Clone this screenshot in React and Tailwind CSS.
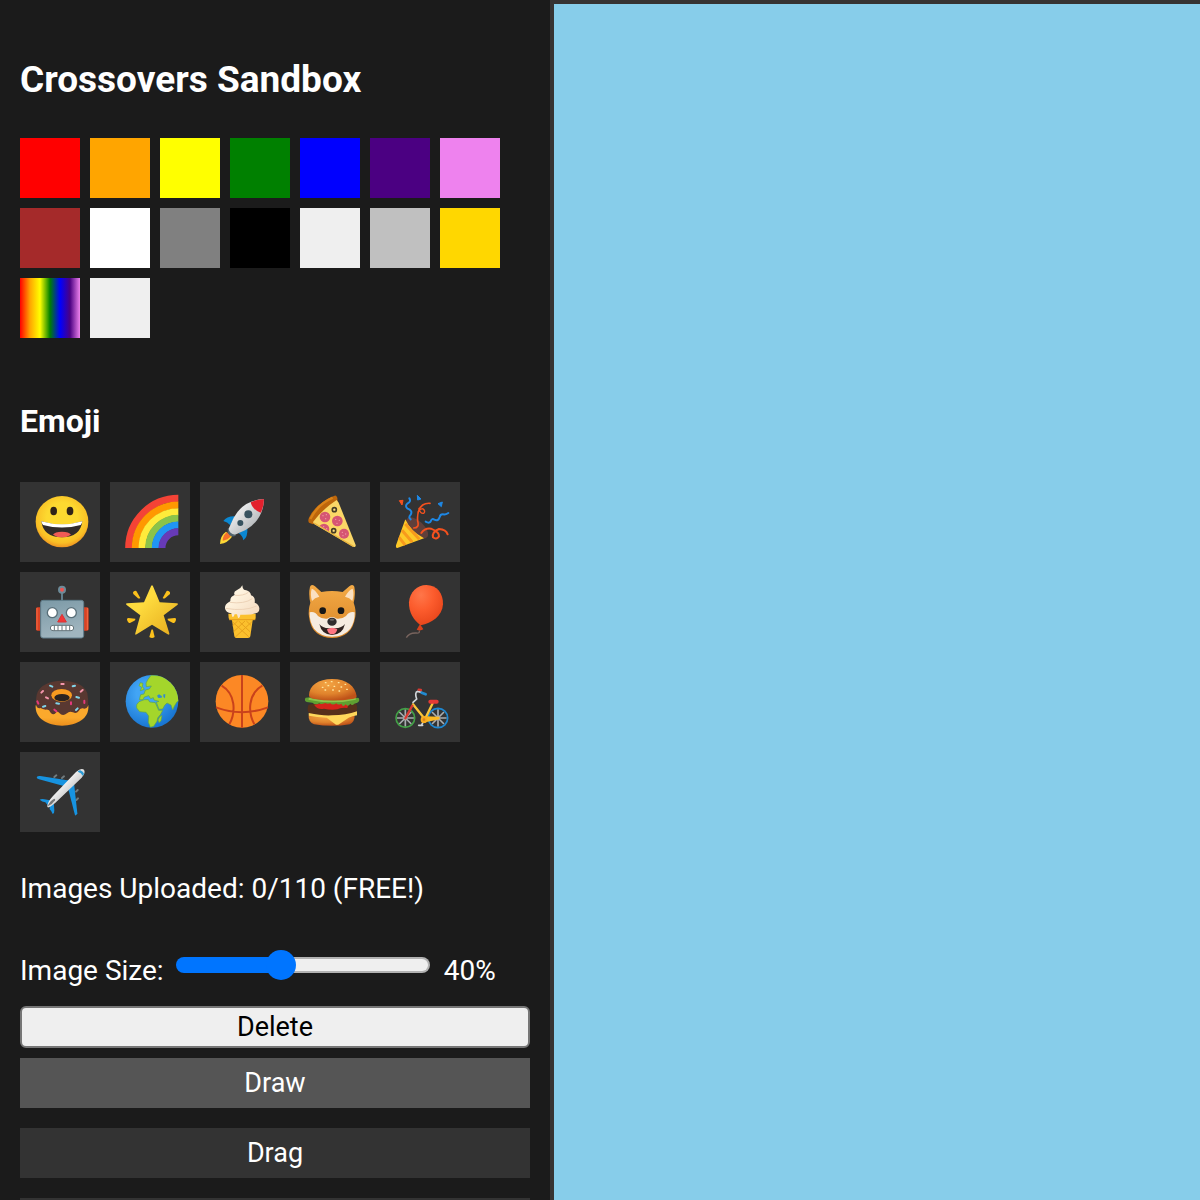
import { useState } from 'react';

const COLORS = [
  { name: 'Red', className: 'bg-[#ff0000]' },
  { name: 'Orange', className: 'bg-[#ffa500]' },
  { name: 'Yellow', className: 'bg-[#ffff00]' },
  { name: 'Green', className: 'bg-[#008000]' },
  { name: 'Blue', className: 'bg-[#0000ff]' },
  { name: 'Indigo', className: 'bg-[#4b0082]' },
  { name: 'Violet', className: 'bg-[#ee82ee]' },
  { name: 'Brown', className: 'bg-[#a52a2a]' },
  { name: 'White', className: 'bg-white' },
  { name: 'Gray', className: 'bg-[#808080]' },
  { name: 'Black', className: 'bg-black' },
  { name: 'Default', className: 'bg-[#efefef]' },
  { name: 'Silver', className: 'bg-[#c0c0c0]' },
  { name: 'Gold', className: 'bg-[#ffd700]' },
  {
    name: 'Rainbow',
    className: 'bg-[linear-gradient(to_right,red,orange,yellow,green,blue,indigo,violet)]',
  },
  { name: 'Eraser', className: 'bg-[#efefef]' },
];

function Grinning() {
  return (
    <>
      <defs>
        <radialGradient id="face" cx="50%" cy="42%" r="58%">
          <stop offset="0.5" stopColor="#fdd930" />
          <stop offset="0.85" stopColor="#f9bf25" />
          <stop offset="1" stopColor="#ee9422" />
        </radialGradient>
      </defs>
      <ellipse cx="126" cy="119" rx="79" ry="77" fill="url(#face)" />
      <ellipse cx="101" cy="87" rx="10" ry="13" fill="#302318" />
      <ellipse cx="150" cy="87" rx="10" ry="13" fill="#302318" />
      <path d="M64 118Q126 138 187 118Q181 166 126 166Q70 166 64 118Z" fill="#302b2a" />
      <path d="M64 118Q126 136 187 118Q186 125 182 129Q126 144 69 129Q65 125 64 118Z" fill="#fff" />
      <path d="M99 158Q104 149 126 149Q147 149 153 158Q142 166 126 166Q110 166 99 158Z" fill="#ef5a55" />
    </>
  );
}

function Rainbow() {
  return (
    <g fill="none" strokeWidth="21">
      <path d="M56 198A149 149 0 0 1 205 49" stroke="#f44336" />
      <path d="M76 198A129 129 0 0 1 205 69" stroke="#ff9800" />
      <path d="M96 198A109 109 0 0 1 205 89" stroke="#ffeb3b" />
      <path d="M116 198A89 89 0 0 1 205 109" stroke="#8bc34a" />
      <path d="M136 198A69 69 0 0 1 205 129" stroke="#2196f3" />
      <path d="M156 198A49 49 0 0 1 205 149" stroke="#673ab7" />
    </g>
  );
}

function Rocket() {
  return (
    <>
      <defs>
        <linearGradient id="hull" x1="0" y1="0" x2="1" y2="1">
          <stop offset="0.2" stopColor="#f5f5f5" />
          <stop offset="0.75" stopColor="#b5b9bc" />
        </linearGradient>
      </defs>
      <path d="M70 117Q80 102 105 103L91 130Q82 119 70 117Z" fill="#0b87d1" />
      <path d="M142 139Q144 165 130 175Q128 161 116 154Z" fill="#0b87d1" />
      <path d="M60 186Q61 160 78 149L96 164Q84 182 60 186Z" fill="#fdd835" />
      <path d="M68 176Q69 158 81 151L93 162Q84 174 68 176Z" fill="#f4702c" />
      <path d="M84 138L108 161Q97 166 89 160Q80 152 84 138Z" fill="#52656e" />
      <path d="M192 52Q132 52 101 107L86 140Q88 155 105 158L137 144Q190 113 192 52Z" fill="url(#hull)" />
      <path d="M192 52Q171 51 152 61Q156 82 182 92Q192 72 192 52Z" fill="#e3202d" />
      <circle cx="145" cy="97" r="12" fill="#37525f" />
      <circle cx="121" cy="123" r="9" fill="#37525f" />
    </>
  );
}

function Pizza() {
  return (
    <>
      <defs>
        <clipPath id="slice">
          <path d="M138 50Q96 79 69 119L197 195Z" />
        </clipPath>
      </defs>
      <path d="M132 42Q138 38 142 47L143 66L69 127L57 122Q53 117 57 107Q77 65 132 42Z" fill="#bd660b" />
      <path d="M128 47Q82 68 61 111" fill="none" stroke="#d98218" strokeWidth="7" />
      <path d="M140 54Q98 81 69 120L72 126L190 194Q198 197 197 189L146 62Z" fill="#fbd767" />
      <path d="M72 123L190 193" stroke="#eab53f" strokeWidth="4" />
      <g fill="#d65573" clipPath="url(#slice)">
        <circle cx="105" cy="105" r="16" />
        <circle cx="142" cy="117" r="16" />
        <circle cx="102" cy="141" r="16" />
        <circle cx="162" cy="155" r="15" />
      </g>
      <g fill="#f19aa8">
        <circle cx="99" cy="101" r="2" /><circle cx="109" cy="98" r="2" /><circle cx="107" cy="110" r="2" />
        <circle cx="137" cy="112" r="2" /><circle cx="148" cy="115" r="2" /><circle cx="141" cy="124" r="2" />
        <circle cx="157" cy="151" r="2" /><circle cx="167" cy="156" r="2" /><circle cx="159" cy="161" r="2" />
        <circle cx="101" cy="134" r="2" /><circle cx="110" cy="140" r="2" />
      </g>
      <g fill="#ffe082" stroke="#453b24" strokeWidth="5">
        <circle cx="133" cy="83" r="6" />
        <circle cx="131" cy="146" r="6" />
      </g>
    </>
  );
}

function Party() {
  return (
    <>
      <defs>
        <clipPath id="cone">
          <path d="M76 112Q92 148 132 169L52 198Q46 198 48 190Z" />
        </clipPath>
      </defs>
      <ellipse cx="111" cy="138" rx="41" ry="21" transform="rotate(43 111 138)" fill="#603f3a" />
      <g clipPath="url(#cone)">
        <path d="M40 105H140V200H40Z" fill="#fdc928" />
        <path d="M76 126L118 172M66 145L97 181M55 163L76 190" stroke="#f79a1d" strokeWidth="9" />
      </g>
      <g fill="none" strokeLinecap="round" strokeWidth="6">
        <path d="M88 49Q94 59 83 64Q73 72 83 80Q99 86 92 98Q84 107 92 112" stroke="#1e88e5" />
        <path d="M101 138Q119 138 113 117Q110 83 128 69Q137 63 150 64" stroke="#f4511e" strokeWidth="5" />
        <path d="M117 79Q121 96 131 94Q138 87 128 80Q120 80 115 90" stroke="#f4511e" strokeWidth="4" />
        <path d="M137 119Q150 126 153 116Q156 108 163 113Q175 119 179 105Q181 96 190 97Q196 99 205 93" stroke="#1e88e5" />
        <path d="M124 153Q135 137 153 140Q178 150 177 163Q169 174 159 166Q155 150 177 141Q198 142 203 157" stroke="#f4511e" />
      </g>
      <path d="M58 56L69 55L66 69Z" fill="#f4511e" stroke="#f4511e" strokeWidth="3" />
      <path d="M112 40L123 51L113 54Z" fill="#1e88e5" stroke="#1e88e5" strokeWidth="3" />
      <path d="M174 65L187 60L184 74Z" fill="#1e88e5" stroke="#1e88e5" strokeWidth="3" />
    </>
  );
}

function Robot() {
  return (
    <>
      <defs>
        <linearGradient id="metal" x1="0" y1="0" x2="0.3" y2="1">
          <stop offset="0" stopColor="#7b99a6" />
          <stop offset="1" stopColor="#a0b5bf" />
        </linearGradient>
      </defs>
      <path d="M126 60V88" stroke="#607d8b" strokeWidth="6" />
      <circle cx="126" cy="53" r="12" fill="#6d8b99" />
      <circle cx="126" cy="53" r="6" fill="#ef5350" />
      <path d="M61 106H52Q48 106 48 111V171Q48 176 52 176H61Z" fill="#d94224" />
      <path d="M192 106H201Q206 106 206 111V171Q206 176 201 176H192Z" fill="#d94224" />
      <path d="M51 108V174M202 108V174" stroke="#f26b45" strokeWidth="3" />
      <rect x="62" y="85" width="129" height="113" rx="7" fill="url(#metal)" stroke="#607d8b" strokeWidth="3" />
      <circle cx="97" cy="122" r="15" fill="#fff" stroke="#596f79" strokeWidth="4" />
      <circle cx="154" cy="122" r="15" fill="#fff" stroke="#596f79" strokeWidth="4" />
      <path d="M126 127L139 150H113Z" fill="#f33636" stroke="#d73536" strokeWidth="3" strokeLinejoin="round" />
      <rect x="91" y="160" width="70" height="16" rx="8" fill="#fff" stroke="#65757b" strokeWidth="3" />
      <path d="M103 160V176M114 160V176M126 160V176M138 160V176M149 160V176" stroke="#65757b" strokeWidth="3" />
    </>
  );
}

function GlowingStar() {
  return (
    <>
      <defs>
        <linearGradient id="star" x1="0" y1="0" x2="1" y2="1">
          <stop offset="0.35" stopColor="#fedb3e" />
          <stop offset="1" stopColor="#e4a91c" />
        </linearGradient>
      </defs>
      <path
        d="M123 43Q126 36 129 43L149 91L200 94Q207 95 202 99L161 130L178 184Q179 191 173 187L126 158L80 187Q74 191 76 184L91 130L50 99Q45 95 52 94L102 91Z"
        fill="url(#star)"
      />
      <g fill="#fcc11c">
        <path d="M69 61Q72 55 79 57L91 78Q88 81 84 79L70 66Z" />
        <path d="M180 61Q176 55 170 57L158 78Q161 81 165 79L180 66Z" />
        <path d="M51 143Q50 138 55 138L76 140Q77 144 73 146L60 153Q54 153 51 143Z" />
        <path d="M198 143Q200 138 194 138L173 140Q172 144 176 146L189 153Q196 153 198 143Z" />
        <path d="M118 195L124 174Q126 170 129 174L134 195Q126 201 118 195Z" />
      </g>
    </>
  );
}

function IceCream() {
  return (
    <>
      <defs>
        <linearGradient id="cream" x1="0" y1="0" x2="1" y2="1">
          <stop offset="0.3" stopColor="#fff4e0" />
          <stop offset="1" stopColor="#f3d8bd" />
        </linearGradient>
      </defs>
      <path d="M85 125H167V139Q166 144 158 145L151 193Q150 198 144 198H109Q104 198 103 193L96 145Q87 144 86 139Z" fill="#fbc02d" />
      <path d="M98 150L146 194M116 147L152 181M139 147L153 160M155 150L106 195M135 147L101 179M113 147L98 161" stroke="#e7a21d" strokeWidth="3" />
      <path d="M87 143H166" stroke="#e59d1b" strokeWidth="3" />
      <path
        d="M127 40Q122 51 110 55Q99 60 104 69Q91 74 91 84Q92 88 87 90Q74 97 75 109Q77 123 94 124L97 134Q101 137 104 127L111 127L114 137Q119 142 121 128Q151 130 167 124Q179 121 178 108Q176 96 164 92Q167 74 153 70Q153 57 132 53Q127 48 127 40Z"
        fill="url(#cream)"
      />
      <path d="M105 70Q130 72 145 61M89 91Q133 97 157 80M77 109Q133 119 170 102" fill="none" stroke="#edd3b8" strokeWidth="3" />
    </>
  );
}

function Dog() {
  return (
    <>
      <defs>
        <linearGradient id="fur" x1="0" y1="0" x2="0" y2="1">
          <stop offset="0" stopColor="#f3aa46" />
          <stop offset="1" stopColor="#d98526" />
        </linearGradient>
      </defs>
      <path d="M60 44Q64 35 75 43L94 60Q126 54 158 60L178 43Q189 35 193 44Q197 66 191 92Q199 115 196 134Q191 168 171 184Q153 198 126 198Q99 198 81 184Q61 168 57 134Q54 115 61 92Q55 66 60 44Z" fill="url(#fur)" />
      <path d="M65 50Q75 52 88 74Q74 77 66 87Q60 68 65 50Z" fill="#fbe0c0" />
      <path d="M188 50Q178 52 165 74Q179 77 187 87Q193 68 188 50Z" fill="#fbe0c0" />
      <path d="M59 121Q75 117 84 132Q94 141 111 140Q126 130 141 140Q158 141 168 132Q178 117 194 121Q195 150 181 170Q163 193 126 194Q90 193 72 170Q58 150 59 121Z" fill="#f5ebe0" />
      <circle cx="98" cy="116" r="10" fill="#171717" />
      <circle cx="153" cy="116" r="10" fill="#171717" />
      <path d="M88 156Q98 171 126 168Q154 171 165 156Q158 188 126 189Q95 188 88 156Z" fill="#302320" />
      <path d="M111 172Q126 163 142 172Q139 187 126 187Q114 187 111 172Z" fill="#ff7682" />
      <ellipse cx="126" cy="149" rx="14" ry="12" fill="#302d2d" />
      <ellipse cx="126" cy="143" rx="7" ry="3" fill="#6c6869" />
    </>
  );
}

function Balloon() {
  return (
    <>
      <defs>
        <radialGradient id="balloon" cx="35%" cy="25%" r="75%">
          <stop offset="0" stopColor="#ff7649" />
          <stop offset="0.5" stopColor="#fc5c2d" />
          <stop offset="1" stopColor="#e9471c" />
        </radialGradient>
      </defs>
      <path d="M118 176Q120 185 108 183Q88 182 79 197" fill="none" stroke="#78645e" strokeWidth="4" />
      <path d="M120 156L130 172Q121 178 110 173Z" fill="#d9401b" />
      <path d="M139 39C171 39 190 64 189 97C187 132 155 154 122 160C101 145 86 122 87 91C89 60 112 39 139 39Z" fill="url(#balloon)" />
    </>
  );
}

function Doughnut() {
  return (
    <>
      <defs>
        <linearGradient id="dough" x1="0" y1="0" x2="0" y2="1">
          <stop offset="0.6" stopColor="#fba92c" />
          <stop offset="1" stopColor="#ec8f1d" />
        </linearGradient>
      </defs>
      <path d="M47 130C44 169 82 191 126 191C171 191 209 169 205 130Z" fill="url(#dough)" />
      <path
        d="M50 98C57 71 87 56 126 56C166 56 196 71 202 94Q206 116 204 132Q199 143 188 139Q180 138 176 147Q169 157 159 151Q148 146 141 154Q128 164 118 153Q111 145 107 153Q100 161 92 152Q87 140 77 143Q67 142 62 138Q53 141 49 132Q46 114 50 98Z"
        fill="#593831"
      />
      <ellipse cx="125" cy="100" rx="31" ry="19" fill="#f89b20" />
      <ellipse cx="126" cy="107" rx="23" ry="11" fill="#2b2421" />
      <g strokeWidth="6" strokeLinecap="round">
        <path d="M90 71L97 74M158 73L165 71M169 105L177 107M109 124L117 125M168 144L173 139M69 134L76 132" stroke="#81d4e8" />
        <path d="M124 66H131M64 92L69 87M78 106L84 109M182 89L188 84" stroke="#f496ac" />
        <path d="M52 118L55 125M103 143L109 148M153 121V127M193 116V123" stroke="#e5397c" />
      </g>
    </>
  );
}

function Globe() {
  return (
    <>
      <defs>
        <radialGradient id="sea" cx="40%" cy="35%" r="65%">
          <stop offset="0.3" stopColor="#42a5f5" />
          <stop offset="1" stopColor="#1976d2" />
        </radialGradient>
        <clipPath id="earth">
          <circle cx="126" cy="118" r="79" />
        </clipPath>
      </defs>
      <circle cx="126" cy="118" r="79" fill="url(#sea)" />
      <g clipPath="url(#earth)" fill="#a4d62b" stroke="#5fa548" strokeWidth="2">
        <path d="M114 52L123 40L185 43L210 113L200 121L193 133L188 144L183 129L171 123L164 130L158 141L147 142L139 121L147 118L132 114L130 107L122 110L116 101L103 105L99 113L88 113L92 98L102 96L106 84L118 81L124 72L109 74L108 63Z" />
        <path d="M87 119L103 113L115 113L119 120L136 122L146 145L158 145L152 157L143 168L141 178L131 193L121 196L115 181L116 162L108 151L89 149L80 138L80 128Z" />
        <path d="M91 62L99 64L97 73L103 82L91 86L95 76L87 71Z" />
        <path d="M149 164L156 160L153 176L147 182L144 174Z" />
      </g>
      <path d="M141 101L147 97L156 103L155 107L145 108ZM160 97L166 97L165 109L160 105Z" fill="#338ccc" />
    </>
  );
}

function Basketball() {
  return (
    <>
      <circle cx="126" cy="118" r="79" fill="#fc8825" />
      <g fill="none" stroke="#c9421b" strokeWidth="6">
        <path d="M126 39V197M48 136Q126 165 204 136M65 71C107 96 108 150 88 187M187 71C144 96 143 150 163 187" />
      </g>
    </>
  );
}

function Burger() {
  return (
    <>
      <defs>
        <radialGradient id="bun" cx="38%" cy="25%" r="75%">
          <stop offset="0" stopColor="#f3a444" />
          <stop offset="0.6" stopColor="#e0832c" />
          <stop offset="1" stopColor="#bf5319" />
        </radialGradient>
      </defs>
      <path d="M56 157Q54 180 72 187Q126 196 179 187Q195 180 194 157Z" fill="url(#bun)" />
      <path d="M56 128Q127 111 199 126Q205 144 196 156Q126 172 60 157Q48 143 56 128Z" fill="#56301b" />
      <path d="M56 153Q97 162 126 160Q168 160 201 148V160Q187 163 176 167L147 187Q141 191 134 185L110 167Q79 166 57 161Z" fill="#ffd75b" />
      <path d="M72 128Q126 114 176 126L172 138Q151 136 142 142Q123 145 102 140Q82 144 72 128Z" fill="#d4231a" />
      <path
        d="M47 107Q126 96 206 108Q211 117 202 122L193 125Q186 133 181 125Q174 136 167 127Q159 138 154 125Q144 131 139 124Q128 131 121 124Q112 127 106 123Q92 128 88 124Q77 130 67 122L50 120Q41 115 47 107Z"
        fill="#5f9f31"
      />
      <path d="M56 110Q126 126 197 110" fill="none" stroke="#8bc34a" strokeWidth="6" />
      <path d="M57 99C58 71 85 51 126 51C172 51 196 74 200 103Q198 111 186 111Q131 121 69 110Q56 107 57 99Z" fill="url(#bun)" />
      <g stroke="#ffe8a1" strokeWidth="4" strokeLinecap="round">
        <path d="M106 62H108M124 59H126M145 62H147M97 76H99M114 71H116M132 73H134M153 75H155M165 67H167M105 84H107M128 84H130M147 87H149M170 82H172" />
      </g>
    </>
  );
}

function Bicycle() {
  return (
    <>
      <g fill="none" stroke="#a9adb0" strokeWidth="5">
        <path d="M76 142V194M50 168H102M58 150L94 186M94 150L58 186" />
        <path d="M174 142V194M148 168H200M156 150L192 186M192 150L156 186" />
      </g>
      <circle cx="76" cy="168" r="28" fill="none" stroke="#43a047" strokeWidth="5" />
      <circle cx="174" cy="168" r="29" fill="none" stroke="#1e88d2" strokeWidth="5" />
      <g fill="none" strokeLinecap="round" strokeWidth="7">
        <path d="M99 127L132 168M158 124L138 165" stroke="#fbc638" />
        <path d="M132 166L178 168L132 178Z" fill="#fbb823" stroke="#fbb823" />
        <path d="M97 131L76 169" stroke="#d83a32" />
        <path d="M99 121L110 111Q103 91 113 88L124 91" stroke="#d1d5d8" strokeWidth="5" />
        <path d="M125 92L137 97" stroke="#218bd1" strokeWidth="8" />
        <path d="M116 83L123 84" stroke="#d83a32" />
        <path d="M151 119L170 119" stroke="#e53935" strokeWidth="12" />
        <path d="M132 176L124 190M116 190H128" stroke="#d1d5d8" strokeWidth="5" />
      </g>
      <circle cx="132" cy="173" r="10" fill="#f9ad20" />
      <circle cx="132" cy="173" r="4" fill="#dc8520" />
    </>
  );
}

function Airplane() {
  return (
    <>
      <defs>
        <linearGradient id="fuselage" x1="0" y1="0" x2="1" y2="1">
          <stop offset="0.35" stopColor="#fafafa" />
          <stop offset="0.7" stopColor="#bdbdbd" />
        </linearGradient>
      </defs>
      <g stroke="#717b7e" strokeWidth="6" strokeLinecap="round">
        <path d="M103 75L109 70M126 78L132 73M168 119L173 114M169 144L174 139" />
      </g>
      <path d="M50 75Q54 71 61 72L151 86L134 103L57 82Q50 80 50 75Z" fill="#1793e0" />
      <path d="M162 92L172 184Q170 191 165 190L145 112Z" fill="#1793e0" />
      <path d="M59 143Q65 140 73 142L98 146L87 164L76 151Q66 150 59 143Z" fill="#1793e0" />
      <path d="M89 159L101 146L103 175Q104 183 98 186Q95 177 89 172Z" fill="#1793e0" />
      <path d="M82 161Q84 148 99 132L168 60Q183 47 192 53Q198 62 185 77L111 148Q97 162 86 166Q81 167 82 161Z" fill="url(#fuselage)" />
      <path d="M173 59Q177 55 181 55Q190 59 192 65Q190 69 188 71Q184 62 173 59Z" fill="#2a9ad4" />
      <path d="M83 163Q89 146 103 140Q107 140 105 145Q98 157 83 163Z" fill="#777" />
    </>
  );
}

const EMOJI = [
  { name: 'Grinning face', Icon: Grinning },
  { name: 'Rainbow', Icon: Rainbow },
  { name: 'Rocket', Icon: Rocket },
  { name: 'Pizza', Icon: Pizza },
  { name: 'Party popper', Icon: Party },
  { name: 'Robot', Icon: Robot },
  { name: 'Glowing star', Icon: GlowingStar },
  { name: 'Ice cream', Icon: IceCream },
  { name: 'Dog', Icon: Dog },
  { name: 'Balloon', Icon: Balloon },
  { name: 'Doughnut', Icon: Doughnut },
  { name: 'Globe', Icon: Globe },
  { name: 'Basketball', Icon: Basketball },
  { name: 'Burger', Icon: Burger },
  { name: 'Bicycle', Icon: Bicycle },
  { name: 'Airplane', Icon: Airplane },
];

function SizeSlider({ value, onChange }) {
  const fill = `linear-gradient(#0075ff, #0075ff) 0 0 / ${value}% 100% no-repeat border-box`;
  const track = 'linear-gradient(#efefef, #efefef) padding-box';
  const edge = 'linear-gradient(#b2b2b2, #b2b2b2) border-box';

  return (
    <input
      id="image-size"
      type="range"
      min="0"
      max="100"
      value={value}
      onChange={(e) => onChange(Number(e.target.value))}
      className="mb-3 h-4 w-[254px] appearance-none rounded-full border-2 border-transparent [&::-webkit-slider-thumb]:size-[30px] [&::-webkit-slider-thumb]:appearance-none [&::-webkit-slider-thumb]:rounded-full [&::-webkit-slider-thumb]:bg-[#0075ff]"
      style={{ background: `${fill}, ${track}, ${edge}` }}
    />
  );
}

export default function App() {
  const [size, setSize] = useState(40);
  const [mode, setMode] = useState('Draw');

  return (
    <div className="flex h-screen overflow-hidden bg-[#1b1b1b] font-['Roboto',sans-serif] text-white">
      <aside className="w-[550px] shrink-0 overflow-hidden px-5 pt-14">
        <h1 className="text-[37px] leading-[48px] font-bold">Crossovers Sandbox</h1>

        <div className="mt-[34px] flex flex-wrap gap-[10px]">
          {COLORS.map((color) => (
            <button key={color.name} type="button" aria-label={color.name} className={`size-[60px] ${color.className}`} />
          ))}
        </div>

        <h2 className="mt-16 text-[32px] leading-[38px] font-bold">Emoji</h2>

        <div className="mt-[42px] flex flex-wrap gap-[10px]">
          {EMOJI.map(({ name, Icon }) => (
            <button key={name} type="button" aria-label={name} className="size-20 bg-[#333]">
              <svg viewBox="0 0 240 240" className="size-full" aria-hidden="true">
                <Icon />
              </svg>
            </button>
          ))}
        </div>

        <p className="mt-10 text-[28px] leading-[34px]">Images Uploaded: 0/110 (FREE!)</p>

        <div className="mt-12 flex items-center text-[28px] leading-[34px]">
          <label htmlFor="image-size" className="mr-3">Image Size:</label>
          <SizeSlider value={size} onChange={setSize} />
          <span className="ml-[14px]">{size}%</span>
        </div>

        <button
          type="button"
          className="mt-[18px] h-[42px] w-full rounded-md border-2 border-[#767676] bg-[#efefef] text-[27px] leading-8 text-black"
        >
          Delete
        </button>
        <div className="mt-[10px] flex flex-col gap-5">
          {['Draw', 'Drag'].map((label) => (
            <button
              key={label}
              type="button"
              onClick={() => setMode(label)}
              className={`h-[50px] w-full text-[27px] leading-8 ${mode === label ? 'bg-[#555]' : 'bg-[#333]'}`}
            >
              {label}
            </button>
          ))}
          <button type="button" aria-label="More tools" className="h-[50px] w-full bg-[#333]" />
        </div>
      </aside>
      <main className="flex-1 border-t-4 border-l-4 border-[#363333] bg-[#87cdea]" />
    </div>
  );
}
